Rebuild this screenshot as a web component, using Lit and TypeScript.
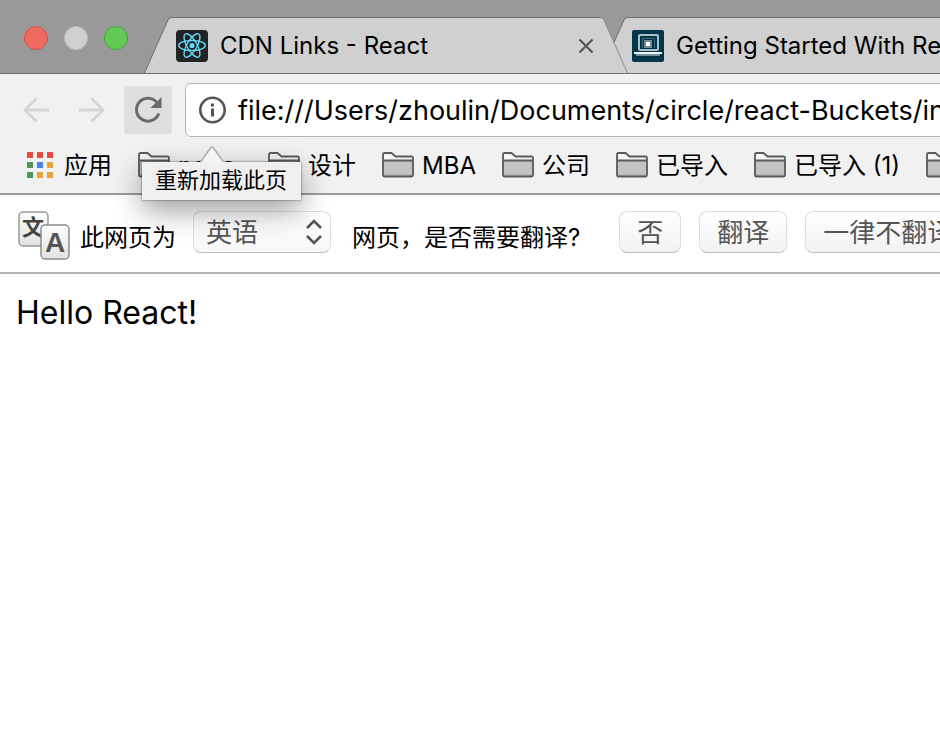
import { LitElement, html, svg, css } from "lit";
import { customElement, property } from "lit/decorators.js";

const closeIcon = html`<svg width="16" height="16" viewBox="0 0 16 16" aria-hidden="true">
  <path d="M1.5 1.5 14.5 14.5M14.5 1.5 1.5 14.5" stroke="#555" stroke-width="2.2" fill="none" />
</svg>`;

const reactIcon = html`<svg width="32" height="32" viewBox="0 0 32 32" aria-hidden="true">
  <rect width="32" height="32" rx="4" fill="#222" />
  <g fill="none" stroke="#61dafb" stroke-width="1.4">
    <ellipse cx="16" cy="15.5" rx="13.3" ry="5" />
    <ellipse cx="16" cy="15.5" rx="13.3" ry="5" transform="rotate(60 16 15.5)" />
    <ellipse cx="16" cy="15.5" rx="13.3" ry="5" transform="rotate(120 16 15.5)" />
  </g>
  <circle cx="16" cy="15.5" r="2.6" fill="#61dafb" />
</svg>`;

const laptopIcon = html`<svg width="32" height="32" viewBox="0 0 32 32" aria-hidden="true">
  <rect width="32" height="32" rx="2" fill="#043549" />
  <rect x="7" y="5" width="19" height="15" rx="1" fill="none" stroke="#a9c0c8" stroke-width="2" />
  <path d="M10.500 18V8.500H22.500V18" fill="none" stroke="#42687a" />
  <rect x="12" y="10" width="8" height="8" fill="#6d8e9a" />
  <rect x="14" y="12" width="4" height="4" fill="#fff" />
  <path d="M2 22H30V24H2Z" fill="#f2f7f8" />
  <path d="M4 24H28V26H4Z" fill="#6f909c" />
</svg>`;

const folderIcon = html`<svg width="32" height="26" viewBox="0 0 32 26" aria-hidden="true">
  <path d="M1 2.5Q1 1 2.5 1H10L14 4H29.500Q31 4 31 5.500V8H1Z" fill="#f5f5f5" />
  <path d="M1 8H31V24H1Z" fill="#c3c3c3" />
  <path d="M1 22H31V24H1Z" fill="#b4b4b4" />
  <path d="M1 2.500Q1 1 2.500 1H9.500L13.500 4.500H29.500Q31 4.500 31 6V23Q31 24.500 29.500 24.500H2.500Q1 24.500 1 23ZM1 8.500H31"
    fill="none" stroke="#5a5a5a" stroke-width="1.800" />
</svg>`;

const appColors = [
  "#e84a3f", "#e84a3f", "#e84a3f",
  "#51975c", "#4486f0", "#e8a33a",
  "#51975c", "#e8a33a", "#e8a33a",
];

const appsIcon = html`<svg width="26" height="26" viewBox="0 0 26 26" aria-hidden="true">
  ${appColors.map((c, i) => svg`<rect x=${(i % 3) * 10} y=${Math.floor(i / 3) * 10} width="6" height="6" fill=${c} />`)}
</svg>`;

const translateIcon = html`<svg class="glyphs" width="52" height="50" viewBox="0 0 52 50" aria-hidden="true">
  <defs>
    <linearGradient id="key" x1="0" y1="0" x2="0" y2="1">
      <stop offset="0" stop-color="#fefefe" />
      <stop offset="1" stop-color="#e2e2e2" />
    </linearGradient>
  </defs>
  <rect x="1" y="1" width="29" height="34" rx="4" fill="url(#key)" stroke="#999" stroke-width="1.500" />
  <text class="key-cjk" x="15" y="24" text-anchor="middle">文</text>
  <rect x="23" y="14" width="28" height="34" rx="4" fill="url(#key)" stroke="#8c8c8c" stroke-width="1.500" />
  <text class="key-latin" x="37" y="41" text-anchor="middle">A</text>
</svg>`;

@customElement("browser-tab")
class BrowserTab extends LitElement {
  @property() label = "";
  @property() icon = "";

  static styles = css`
    :host { display: flex; flex: none; height: 56px; }
    .edge { flex: none; display: block; }
    .body {
      display: flex;
      align-items: center;
      gap: 12px;
      width: 428px;
      box-sizing: border-box;
      padding: 0 6px 0 4px;
      background: #d0d0d0;
      border-top: 1px solid #6f6f6f;
    }
    .body svg { display: block; flex: none; }
    .title {
      flex: 1;
      overflow: hidden;
      white-space: nowrap;
      font-size: 24px;
      line-height: 32px;
    }
    .close { border: 0; padding: 0; background: none; }
  `;

  render() {
    return html`
      <svg class="edge" width="28" height="56" viewBox="0 0 28 56" aria-hidden="true">
        <path d="M.5 56 24 3Q25 .5 28 .5V56Z" fill="#d0d0d0" />
        <path d="M.5 56 24 3Q25 .5 28 .5" fill="none" stroke="#6f6f6f" />
      </svg>
      <div class="body">
        ${this.icon === "react" ? reactIcon : laptopIcon}
        <span class="title">${this.label}</span>
        <button class="close" aria-label="关闭">${closeIcon}</button>
      </div>
      <svg class="edge" width="28" height="56" viewBox="0 0 28 56" aria-hidden="true">
        <path d="M0 .5Q3 .5 4 3L27.500 56H0Z" fill="#d0d0d0" />
        <path d="M0 .5Q3 .5 4 3L27.500 56" fill="none" stroke="#8a8a8a" />
      </svg>
    `;
  }
}

@customElement("app-root")
class AppRoot extends LitElement {
  bookmarks = ["node\u00a0", "设计", "MBA", "公司", "已导入", "已导入 (1)", "前端"];

  static styles = css`
    :host {
      display: block;
      min-height: 100vh;
      overflow: hidden;
      background: #fff;
      color: #000;
      font-family: Inter, "Noto Sans CJK SC", sans-serif;
    }
    button, input, select { font-family: inherit; color: inherit; margin: 0; }
    svg { display: block; flex: none; }

    .tabstrip {
      display: flex;
      align-items: flex-end;
      height: 73px;
      overflow: hidden;
      background: #999;
      border-bottom: 1px solid #6f6f6f;
    }
    .lights {
      display: flex;
      flex: none;
      align-self: center;
      gap: 16px;
      width: 120px;
      padding: 2px 0 0 24px;
    }
    .light {
      width: 24px;
      height: 24px;
      padding: 0;
      border: 1px solid #d65249;
      border-radius: 50%;
      background: #ef6b5f;
    }
    .light.min { border-color: #bdbdbd; background: #d0d0d0; }
    .light.max { border-color: #43a53a; background: #62c955; }
    .tab { position: relative; z-index: 1; }
    .tab + .tab { margin-left: -28px; z-index: 0; }

    .chrome { background: #f1f1f1; border-bottom: 2px solid #9c9c9c; }
    .toolbar {
      display: flex;
      align-items: center;
      padding: 9px 0 0 8px;
    }
    .nav {
      display: flex;
      align-items: center;
      justify-content: center;
      width: 56px;
      height: 48px;
      flex: none;
      padding: 0;
      border: 0;
      background: none;
    }
    .nav.reload {
      width: 48px;
      margin: 0 13px 0 4px;
      border-radius: 4px;
      background: #dfdfdf;
    }
    .omnibox {
      display: flex;
      align-items: center;
      flex: 1;
      gap: 11px;
      height: 54px;
      box-sizing: border-box;
      margin-right: -12px;
      padding-left: 13px;
      border: 1px solid #b4b4b4;
      border-radius: 6px;
      background: #fff;
    }
    .url {
      flex: 1;
      min-width: 0;
      padding: 2px 0 0;
      border: 0;
      outline: 0;
      background: none;
      font-size: 27px;
      line-height: 40px;
    }
    .bookmarks {
      display: flex;
      align-items: center;
      gap: 26px;
      height: 56px;
      padding-left: 27px;
    }
    .bookmark {
      display: flex;
      align-items: center;
      flex: none;
      gap: 8px;
      color: inherit;
      font-size: 24px;
      line-height: 32px;
      text-decoration: none;
      white-space: nowrap;
    }
    .bookmark span { padding-top: 2px; }
    .bookmark.apps { gap: 11px; }

    .tip {
      position: absolute;
      z-index: 2;
      left: 142px;
      top: 162px;
      box-sizing: border-box;
      padding: 2px 14px 4px 13px;
      background: #efefef;
      font-size: 22px;
      line-height: 32px;
      white-space: nowrap;
      box-shadow: 0 0 2px rgba(0, 0, 0, 0.6), 0 10px 30px rgba(0, 0, 0, 0.4);
    }
    .tip-arrow { position: absolute; left: 58px; top: -16px; }

    .infobar {
      display: flex;
      align-items: flex-start;
      height: 61px;
      padding: 16px 0 0 18px;
      border-bottom: 2px solid #b4b4b4;
      white-space: nowrap;
    }
    .glyphs { margin-right: 10px; }
    .key-cjk { font: bold 22px "Noto Sans CJK SC", sans-serif; fill: #444; }
    .key-latin { font: bold 28px "Liberation Sans", sans-serif; fill: #555; }
    .msg { padding-top: 11px; font-size: 24px; line-height: 32px; }
    .picker { position: relative; flex: none; margin: 0 21px 0 17px; }
    .picker svg { position: absolute; right: 8px; top: 8px; pointer-events: none; }
    .control {
      box-sizing: border-box;
      flex: none;
      height: 42px;
      padding: 2px 17px 0;
      border: 1px solid #dedede;
      border-bottom-color: #bdbdbd;
      border-radius: 8px;
      background: linear-gradient(#fff, #f2f2f2);
      color: #555;
      font-size: 26px;
      line-height: 36px;
    }
    .control.select {
      display: block;
      appearance: none;
      width: 138px;
      padding: 2px 12px 0;
      background: linear-gradient(rgba(255, 255, 255, 0.6), rgba(242, 242, 242, 0.6));
    }
    .actions { display: flex; flex: none; gap: 18px; margin-left: 39px; }

    .page { padding: 19px 16px; font-size: 32px; line-height: 40px; }
  `;

  render() {
    return html`
      <header>
        <div class="tabstrip">
          <div class="lights">
            <button class="light" aria-label="关闭窗口"></button>
            <button class="light min" aria-label="最小化"></button>
            <button class="light max" aria-label="缩放"></button>
          </div>
          <browser-tab class="tab" icon="react" label="CDN Links - React"></browser-tab>
          <browser-tab class="tab" icon="laptop" label="Getting Started With React"></browser-tab>
        </div>
        <div class="chrome">
          <div class="toolbar">
            <button class="nav" aria-label="后退">
              <svg width="28" height="28" viewBox="0 0 28 28"><path d="M27 14H3M14.500 2.500 3 14 14.500 25.500" fill="none" stroke="#d6d6d6" stroke-width="3" /></svg>
            </button>
            <button class="nav" aria-label="前进">
              <svg width="28" height="28" viewBox="0 0 28 28"><path d="M1 14H25M13.500 2.500 25 14 13.500 25.500" fill="none" stroke="#d6d6d6" stroke-width="3" /></svg>
            </button>
            <button class="nav reload" aria-label="重新加载此页" aria-describedby="tip">
              <svg width="28" height="28" viewBox="0 0 28 28">
                <path d="M22.500 5.900A11.500 11.500 0 1 0 24.800 17.600" fill="none" stroke="#6b6b6b" stroke-width="3" />
                <path d="M27.500 1V12H16.500Z" fill="#6b6b6b" />
              </svg>
            </button>
            <label class="omnibox">
              <svg width="28" height="28" viewBox="0 0 28 28" role="img" aria-label="网址">
                <circle cx="13.500" cy="14" r="12.200" fill="none" stroke="#555" stroke-width="2.600" />
                <path d="M12 7.500H15V10.500H12ZM12 12.500H15V20.500H12Z" fill="#555" />
              </svg>
              <input class="url" value="file:///Users/zhoulin/Documents/circle/react-Buckets/index.html" spellcheck="false" />
            </label>
          </div>
          <nav class="bookmarks">
            <a class="bookmark apps" href="#">${appsIcon}<span>应用</span></a>
            ${this.bookmarks.map((b) => html`<a class="bookmark" href="#">${folderIcon}<span>${b}</span></a>`)}
          </nav>
        </div>
        <div class="tip" id="tip" role="tooltip">
          <svg class="tip-arrow" width="24" height="17" viewBox="0 0 24 17" aria-hidden="true">
            <path d="M0 17 10.500 2Q12 0 13.500 2L24 17Z" fill="#f4f4f4" />
            <path d="M.5 16 10.500 2Q12 0 13.500 2L23.500 16" fill="none" stroke="#aaa" stroke-width="1.500" />
          </svg>
          重新加载此页
        </div>
      </header>
      <section class="infobar">
        ${translateIcon}
        <label class="msg" for="lang">此网页为</label>
        <div class="picker">
          <select class="control select" id="lang"><option>英语</option></select>
          <svg width="18" height="26" viewBox="0 0 18 26" aria-hidden="true">
            <path d="M2 9 9 2 16 9M2 17 9 24 16 17" fill="none" stroke="#555" stroke-width="2.600" />
          </svg>
        </div>
        <span class="msg">网页，是否需要翻译?</span>
        <div class="actions">
          <button class="control">否</button>
          <button class="control">翻译</button>
          <button class="control">一律不翻译</button>
        </div>
      </section>
      <main class="page">Hello React!</main>
    `;
  }
}
